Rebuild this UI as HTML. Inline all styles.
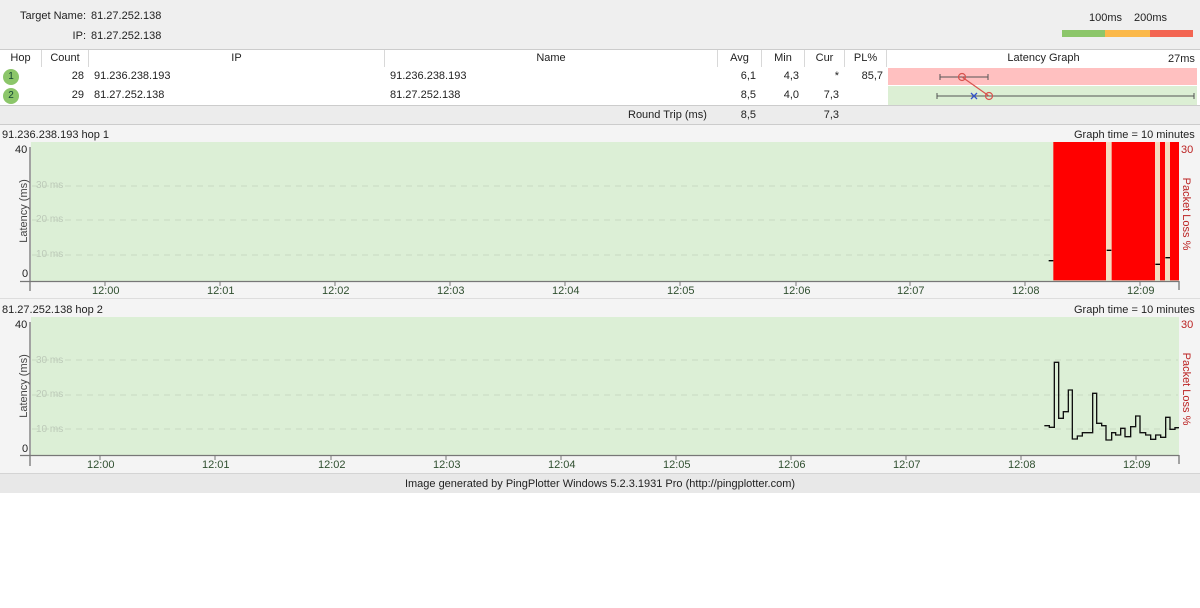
<!DOCTYPE html>
<html><head><meta charset="utf-8">
<style>
*{margin:0;padding:0;box-sizing:border-box}
body{width:1200px;height:608px;background:#fff;font-family:"Liberation Sans",sans-serif;font-size:11px;color:#222;position:relative;overflow:hidden}
.a{position:absolute;white-space:nowrap}
.r{text-align:right}
.c{text-align:center}
.ch{border-right:1px solid #d8d8d8;height:17px;top:50px;line-height:17px;text-align:center}
.tl{color:#2f4f2f;font-size:11px}
.ms{color:#bcc9b8;font-size:10px}
</style></head><body>
<div class="a" style="left:0;top:0;width:1200px;height:49px;background:#efefef"></div>
<div class="a r" style="left:0;top:10px;width:86px">Target Name:</div>
<div class="a" style="left:91px;top:10px">81.27.252.138</div>
<div class="a r" style="left:0;top:30px;width:86px">IP:</div>
<div class="a" style="left:91px;top:30px">81.27.252.138</div>
<div class="a" style="left:1089px;top:12px">100ms</div>
<div class="a" style="left:1134px;top:12px">200ms</div>
<div class="a" style="left:1062px;top:30px;width:43px;height:7px;background:#8cc66a"></div>
<div class="a" style="left:1105px;top:30px;width:45px;height:7px;background:#fbb849"></div>
<div class="a" style="left:1150px;top:30px;width:43px;height:7px;background:#f36552"></div>

<div class="a" style="left:0;top:49px;width:1200px;height:1px;background:#ccc"></div>
<div class="a" style="left:0;top:50px;width:1200px;height:56px;background:#fff"></div>
<div class="a ch" style="left:0;width:42px">Hop</div>
<div class="a ch" style="left:42px;width:47px">Count</div>
<div class="a ch" style="left:89px;width:296px">IP</div>
<div class="a ch" style="left:385px;width:333px">Name</div>
<div class="a ch" style="left:718px;width:44px">Avg</div>
<div class="a ch" style="left:762px;width:43px">Min</div>
<div class="a ch" style="left:805px;width:40px">Cur</div>
<div class="a ch" style="left:845px;width:42px">PL%</div>
<div class="a ch" style="left:887px;width:313px;border:none">Latency Graph</div>
<div class="a" style="left:1168px;top:53px">27ms</div>

<div class="a" style="left:3px;top:69px;width:16px;height:16px;border-radius:8px;background:#8cc66a;text-align:center;line-height:16px;font-size:10px;color:#143">1</div>
<div class="a" style="left:3px;top:88px;width:16px;height:16px;border-radius:8px;background:#8cc66a;text-align:center;line-height:16px;font-size:10px;color:#143">2</div>
<div class="a r" style="left:42px;top:70px;width:42px">28</div>
<div class="a r" style="left:42px;top:89px;width:42px">29</div>
<div class="a" style="left:94px;top:70px">91.236.238.193</div>
<div class="a" style="left:94px;top:89px">81.27.252.138</div>
<div class="a" style="left:390px;top:70px">91.236.238.193</div>
<div class="a" style="left:390px;top:89px">81.27.252.138</div>
<div class="a r" style="left:718px;top:70px;width:38px">6,1</div>
<div class="a r" style="left:718px;top:89px;width:38px">8,5</div>
<div class="a r" style="left:762px;top:70px;width:37px">4,3</div>
<div class="a r" style="left:762px;top:89px;width:37px">4,0</div>
<div class="a r" style="left:805px;top:70px;width:34px">*</div>
<div class="a r" style="left:805px;top:89px;width:34px">7,3</div>
<div class="a r" style="left:845px;top:70px;width:38px">85,7</div>
<div class="a" style="left:888px;top:68px;width:309px;height:17px;background:#ffc0c0"></div>
<div class="a" style="left:888px;top:86px;width:309px;height:19px;background:#dcefd4"></div>
<svg class="a" style="left:0;top:0" width="1200" height="110">
<g stroke="#555" stroke-width="1" fill="none">
<path d="M940 77H988M940 74V80M988 74V80M937 96H1194M937 93V99M1194 93V99"/>
</g>
<path d="M962 77L989 96" stroke="#d9534f" stroke-width="1.2"/>
<circle cx="962" cy="77" r="3.5" fill="none" stroke="#d9534f" stroke-width="1.2"/>
<circle cx="989" cy="96" r="3.5" fill="none" stroke="#d9534f" stroke-width="1.2"/>
<path d="M971 93L977 99M977 93L971 99" stroke="#3355cc" stroke-width="1.3"/>
</svg>
<div class="a" style="left:0;top:105px;width:1200px;height:1px;background:#ccc"></div>
<div class="a" style="left:0;top:106px;width:1200px;height:18px;background:#ececec"></div>
<div class="a" style="left:628px;top:109px">Round Trip (ms)</div>
<div class="a r" style="left:718px;top:109px;width:38px">8,5</div>
<div class="a r" style="left:805px;top:109px;width:34px">7,3</div>
<div class="a" style="left:0;top:124px;width:1200px;height:1px;background:#ccc"></div>
<div class="a" style="left:0;top:125px;width:1200px;height:349px;background:#f4f4f4"></div>

<!-- Graph 1 -->
<div class="a" style="left:2px;top:129px">91.236.238.193 hop 1</div>
<div class="a" style="left:1074px;top:129px">Graph time = 10 minutes</div>
<div class="a" style="left:31px;top:142px;width:1148px;height:139px;background:#dcefd6"></div>
<svg class="a" style="left:0;top:125px" width="1200" height="180">
<g stroke="#c8d8c2" stroke-dasharray="6,5"><path d="M32 61H1178M32 95H1178M32 130H1178"/></g>
</svg>
<div class="a ms" style="left:36px;top:180px">30 ms</div>
<div class="a ms" style="left:36px;top:214px">20 ms</div>
<div class="a ms" style="left:36px;top:249px">10 ms</div>
<div class="a" style="left:15px;top:144px">40</div>
<div class="a" style="left:22px;top:268px">0</div>
<div class="a" style="left:-8px;top:205px;transform:rotate(-90deg);color:#444">Latency (ms)</div>
<div class="a" style="left:1181px;top:144px;color:#b22">30</div>
<div class="a" style="left:1146px;top:208px;transform:rotate(90deg);color:#b22;width:80px;text-align:center">Packet Loss %</div>
<svg class="a" style="left:1000px;top:130px" width="200" height="180" viewBox="0 0 600 540">
<rect x="318" y="36" width="17" height="415" fill="#f5dcc0"/>
<rect x="465" y="36" width="15" height="415" fill="#f5dcc0"/>
<rect x="495" y="36" width="15" height="415" fill="#f5dcc0"/>
<rect x="160" y="36" width="158" height="415" fill="#f00"/>
<rect x="335" y="36" width="130" height="415" fill="#f00"/>
<rect x="480" y="36" width="15" height="415" fill="#f00"/>
<rect x="510" y="36" width="27" height="415" fill="#f00"/>
<g stroke="#000" stroke-width="4"><path d="M146 392H160M320 361H334M466 403H480M496 383H510"/></g>
</svg>
<svg class="a" style="left:0;top:0" width="1200" height="300">
<path d="M30 147V291M20 281.5H1179M1179 281V290" stroke="#777" stroke-width="1.3" fill="none"/>
<g stroke="#777"><path d="M105 281V286M220 281V286M335 281V286M450 281V286M565 281V286M680 281V286M796 281V286M910 281V286M1025 281V286M1140 281V286"/></g>
</svg>
<div class="a tl" style="left:92px;top:285px">12:00</div>
<div class="a tl" style="left:207px;top:285px">12:01</div>
<div class="a tl" style="left:322px;top:285px">12:02</div>
<div class="a tl" style="left:437px;top:285px">12:03</div>
<div class="a tl" style="left:552px;top:285px">12:04</div>
<div class="a tl" style="left:667px;top:285px">12:05</div>
<div class="a tl" style="left:783px;top:285px">12:06</div>
<div class="a tl" style="left:897px;top:285px">12:07</div>
<div class="a tl" style="left:1012px;top:285px">12:08</div>
<div class="a tl" style="left:1127px;top:285px">12:09</div>
<div class="a" style="left:0;top:298px;width:1200px;height:1px;background:#ddd"></div>

<!-- Graph 2 -->
<div class="a" style="left:2px;top:304px">81.27.252.138 hop 2</div>
<div class="a" style="left:1074px;top:304px">Graph time = 10 minutes</div>
<div class="a" style="left:31px;top:317px;width:1148px;height:138px;background:#dcefd6"></div>
<svg class="a" style="left:0;top:300px" width="1200" height="160">
<g stroke="#c8d8c2" stroke-dasharray="6,5"><path d="M32 60H1178M32 95H1178M32 129H1178"/></g>
</svg>
<div class="a ms" style="left:36px;top:355px">30 ms</div>
<div class="a ms" style="left:36px;top:389px">20 ms</div>
<div class="a ms" style="left:36px;top:424px">10 ms</div>
<div class="a" style="left:15px;top:319px">40</div>
<div class="a" style="left:22px;top:443px">0</div>
<div class="a" style="left:-8px;top:380px;transform:rotate(-90deg);color:#444">Latency (ms)</div>
<div class="a" style="left:1181px;top:319px;color:#b22">30</div>
<div class="a" style="left:1146px;top:383px;transform:rotate(90deg);color:#b22;width:80px;text-align:center">Packet Loss %</div>
<svg class="a" style="left:1000px;top:300px" width="200" height="200" viewBox="0 0 600 600">
<path fill="none" stroke="#111" stroke-width="4" d="M133 377H148V382H163V187H176V355H190V335H205V270H217V417H232V408H247V398H278V280H290V370H305V377H318V420H335V398H347V405H362V385H375V410H392V380H407V348H420V398H437V405H452V418H467V405H482V412H497V352H510V388H525V383H537"/>
</svg>
<svg class="a" style="left:0;top:300px" width="1200" height="170">
<path d="M30 22V166M20 155.5H1179M1179 155V164" stroke="#777" stroke-width="1.3" fill="none"/>
<g stroke="#777"><path d="M100 155V160M215 155V160M331 155V160M446 155V160M561 155V160M676 155V160M791 155V160M906 155V160M1021 155V160M1136 155V160"/></g>
</svg>
<div class="a tl" style="left:87px;top:459px">12:00</div>
<div class="a tl" style="left:202px;top:459px">12:01</div>
<div class="a tl" style="left:318px;top:459px">12:02</div>
<div class="a tl" style="left:433px;top:459px">12:03</div>
<div class="a tl" style="left:548px;top:459px">12:04</div>
<div class="a tl" style="left:663px;top:459px">12:05</div>
<div class="a tl" style="left:778px;top:459px">12:06</div>
<div class="a tl" style="left:893px;top:459px">12:07</div>
<div class="a tl" style="left:1008px;top:459px">12:08</div>
<div class="a tl" style="left:1123px;top:459px">12:09</div>

<div class="a" style="left:0;top:473px;width:1200px;height:1px;background:#d4d4d4"></div>
<div class="a" style="left:0;top:474px;width:1200px;height:19px;background:#e8e8e8"></div>
<div class="a c" style="left:0;top:478px;width:1200px">Image generated by PingPlotter Windows 5.2.3.1931 Pro (http://pingplotter.com)</div>
</body></html>
